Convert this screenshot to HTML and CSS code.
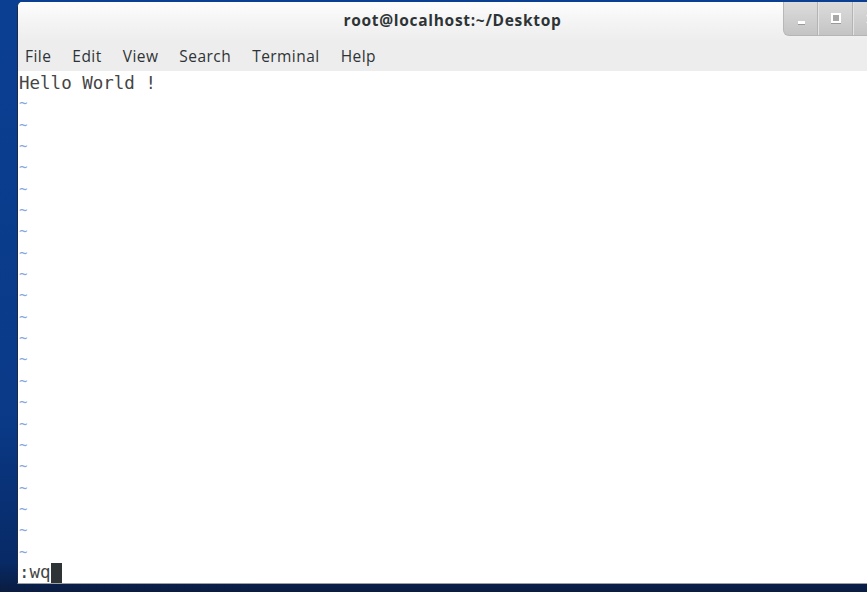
FILE: index.html
```
<!DOCTYPE html>
<html>
<head>
<meta charset="utf-8">
<link rel="stylesheet" href="styles.css">
</head>
<body>
<div class="desktop">
  <div class="window">
    <div class="titlebar">
      <span class="title">root@localhost:~/Desktop</span>
      <div class="buttons">
        <div class="btn"><span class="min"></span></div>
        <div class="btn"><span class="max"></span></div>
        <div class="btn"><svg class="close" width="10" height="10" viewBox="0 0 10 10"><path d="M1 1 L9 9 M9 1 L1 9" stroke="#fff" stroke-width="2.2"/></svg></div>
      </div>
    </div>
    <div class="menubar">
      <span>File</span><span>Edit</span><span>View</span><span>Search</span><span>Terminal</span><span>Help</span>
    </div>
    <div class="term">
      <div class="row hello">Hello World !</div>
      <div class="row tilde">~</div>
      <div class="row tilde">~</div>
      <div class="row tilde">~</div>
      <div class="row tilde">~</div>
      <div class="row tilde">~</div>
      <div class="row tilde">~</div>
      <div class="row tilde">~</div>
      <div class="row tilde">~</div>
      <div class="row tilde">~</div>
      <div class="row tilde">~</div>
      <div class="row tilde">~</div>
      <div class="row tilde">~</div>
      <div class="row tilde">~</div>
      <div class="row tilde">~</div>
      <div class="row tilde">~</div>
      <div class="row tilde">~</div>
      <div class="row tilde">~</div>
      <div class="row tilde">~</div>
      <div class="row tilde">~</div>
      <div class="row tilde">~</div>
      <div class="row tilde">~</div>
      <div class="row tilde">~</div>
      <div class="row cmd">:wq<span class="cursor"></span></div>
    </div>
  </div>
</div>
</body>
</html>
```
FILE: styles.css
```
html, body {
  margin: 0;
  padding: 0;
  width: 867px;
  height: 592px;
  overflow: hidden;
}
.desktop {
  width: 867px;
  height: 592px;
  background: linear-gradient(to bottom, #0b3f92 0%, #0a3a88 70%, #082a66 95%, #0a1c40 100%);
  padding-top: 2px;
  box-sizing: border-box;
}
.window {
  margin-left: 17px;
  width: 870px;
  height: 582px;
  background: #fff;
  border-left: 1px solid #1c2a48;
  border-bottom: 1px solid #a0a0a0;
  border-radius: 5px 0 0 0;
  overflow: hidden;
  display: flex;
  flex-direction: column;
  box-sizing: border-box;
}
.titlebar {
  height: 38px;
  flex: none;
  display: flex;
  align-items: flex-start;
  justify-content: center;
  background: linear-gradient(to bottom, #fdfdfd 0%, #f3f3f3 60%, #eeeeee 100%);
  position: relative;
}
.title {
  font-family: "Open Sans", "Noto Sans", sans-serif;
  font-weight: bold;
  font-size: 15.5px;
  letter-spacing: 0.7px;
  color: #2e3436;
  line-height: 36px;
  margin-left: 0;
}
.buttons {
  position: absolute;
  top: 0;
  left: 765px;
  height: 33px;
  display: flex;
  background: linear-gradient(to bottom, #dcdcdc, #c4c4c4);
  border-radius: 0 0 0 6px;
  border-left: 1px solid #b8b8b8;
  border-bottom: 1px solid #b5b5b5;
}
.btn {
  width: 34px;
  border-right: 1px solid #e4e4e4;
  display: flex;
  align-items: center;
  justify-content: center;
  box-shadow: inset -1px 0 0 #b4b4b4;
}
.min {
  width: 7px;
  height: 3px;
  background: #fff;
  margin-top: 8px;
  box-shadow: 0 1px 0 #9a9a9a;
}
.max {
  width: 6px;
  height: 6px;
  border: 2px solid #fff;
  background: #a8a8a8;
  box-shadow: 0 1px 0 #9a9a9a;
  margin-top: -2px;
}
.close {
  display: block;
}
.menubar {
  height: 31px;
  flex: none;
  background: #ededed;
  display: flex;
  align-items: center;
  gap: 21px;
  padding-left: 7px;
  padding-top: 1px;
  box-sizing: border-box;
  font-family: "Open Sans", "Noto Sans", sans-serif;
  font-size: 15.5px;
  letter-spacing: 0.45px;
  color: #2e3436;
}
.term {
  flex: 1;
  background: #fff;
  padding-left: 1px;
  font-family: "DejaVu Sans Mono", monospace;
  font-size: 17.5px;
  color: #454545;
}
.row {
  height: 21.35px;
  line-height: 21.35px;
  white-space: pre;
}
.hello {
  line-height: 25px;
}
.tilde {
  color: #86a6e2;
  font-size: 14px;
  line-height: 23px;
}
.cmd {
  display: flex;
  align-items: center;
}
.cursor {
  display: inline-block;
  width: 11px;
  height: 20px;
  background: #2e3436;
}
```
